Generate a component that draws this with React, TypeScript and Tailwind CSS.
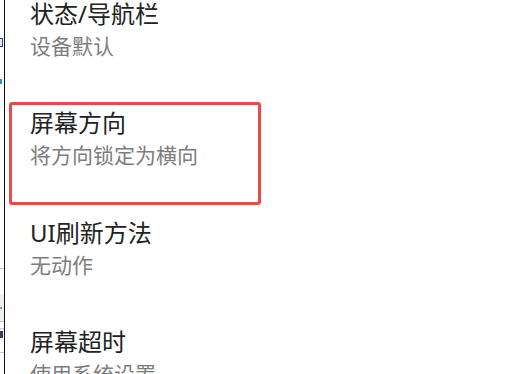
import React from "react";

interface SettingItem {
  title: string;
  value: string;
  highlighted?: boolean;
}

const items: SettingItem[] = [
  { title: "状态/导航栏", value: "设备默认" },
  { title: "屏幕方向", value: "将方向锁定为横向", highlighted: true },
  { title: "UI刷新方法", value: "无动作" },
  { title: "屏幕超时", value: "使用系统设置" },
];

// slice of the window sitting behind, only a few px show
const BehindStrip: React.FC = () => (
  <div className="flex w-[4px] shrink-0 flex-col overflow-hidden bg-white">
    <div className="h-[38px]" />
    <div className="h-[9px] w-[3px] border-y border-r border-[#2a4a8a] bg-[#dfe8f5]" />
    <div className="h-[32px]" />
    <div className="h-[5px] w-[2px] bg-[#2b8fd8]" />
    <div className="h-[184px]" />
    <div className="h-[1px] bg-[#c8c8c8]" />
    <div className="h-[25px]" />
    <div className="flex h-[27px] items-center bg-[#f0f0f0]">
      <div className="h-[2px] w-[2px] bg-[#5aa0e0]" />
    </div>
    <div className="h-[1px] bg-[#c8c8c8]" />
    <div className="h-[6px]" />
    <div className="h-[1px] bg-[#c8c8c8]" />
    <div className="h-[11px] bg-[#f6f6f6]">
      <div className="mt-[2px] h-[7px] w-[3px] bg-[#3a3a5a]" />
    </div>
    <div className="h-[12px]" />
    <div className="h-[1px] bg-[#c8c8c8]" />
  </div>
);

export default function App() {
  return (
    <div
      className="flex h-[374px] w-[514px] overflow-hidden bg-white"
      style={{ fontFamily: '"Noto Sans", "Noto Sans CJK SC", sans-serif' }}
    >
      <BehindStrip />
      <div className="w-[1px] shrink-0 bg-[#111]" />
      <div className="flex-1">
        <div className="-mt-[18.5px] flex flex-col">
          {items.map((item) => (
            <div key={item.title} className="relative h-[109.5px] shrink-0 pl-[25px] pt-[16px]">
              <div className="text-[24px] leading-[32px] text-[#222]">{item.title}</div>
              <div className="mt-[2px] text-[21px] leading-[28px] text-[#7d7d7d]">{item.value}</div>
              {item.highlighted && (
                <div className="absolute left-[4px] top-[10.5px] h-[103px] w-[252px] rounded-[3px] border-[3px] border-[#e84a4a]" />
              )}
            </div>
          ))}
        </div>
      </div>
    </div>
  );
}
